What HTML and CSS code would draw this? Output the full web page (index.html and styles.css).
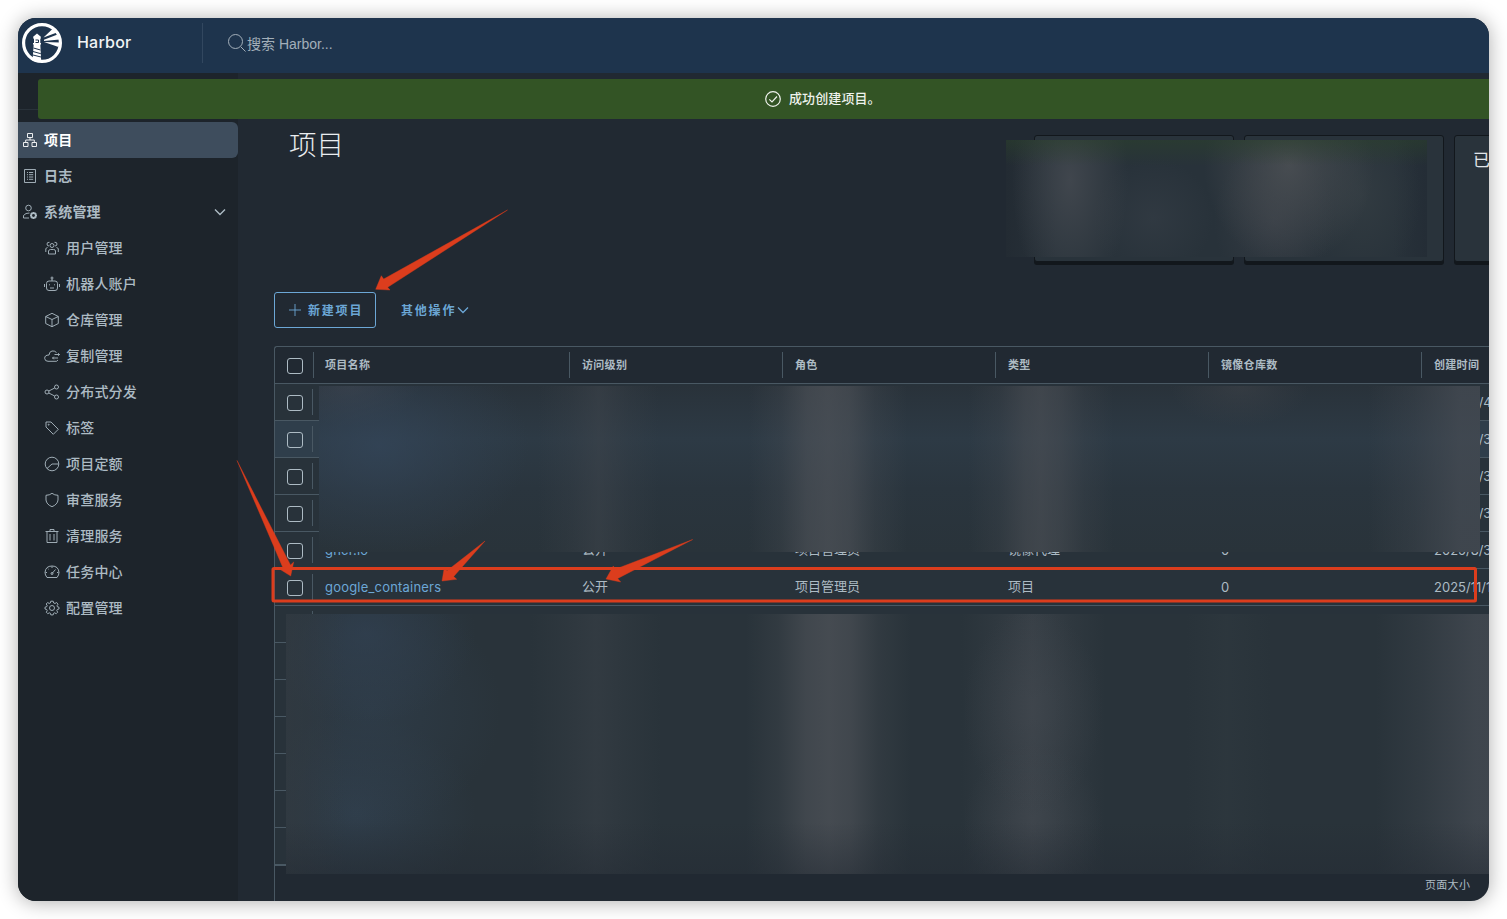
FILE: index.html
```html
<!DOCTYPE html>
<html lang="zh-CN">
<head>
    <meta charset="UTF-8">
    <meta name="viewport" content="width=device-width, initial-scale=1.0">
    <title>Harbor</title>
    <link rel="stylesheet" href="styles.css">
</head>
<body>
    <div class="window">
        <header class="header">
            <div class="branding">
                <svg class="logo" viewBox="0 0 40 40">
                    <circle cx="20" cy="20" r="18.4" fill="none" stroke="#fff" stroke-width="3.2"/>
                    <g fill="#fff">
                        <path d="M11 15.500L11.500 13.500L15 10.500L18.500 13.500L19 15.500Z"/>
                        <path d="M12 15H18.300V20H19V21.500H11V20H12Z"/>
                        <path d="M11.700 21H18.300L19.200 38H10.500Z"/>
                        <path d="M21.500 14.500L31.500 5L35 9.500Z"/>
                        <path d="M22 16.800L35.500 11.500L37.500 16.500L22 18Z"/>
                        <path d="M22 19L38 19.500L36.500 24Z"/>
                    </g>
                    <path d="M13.500 17H16.500V19.500H13.500M11.500 25L18.500 27M11 28.500L18.800 30.700M11 32L19 34" fill="none" stroke="#1e344d" stroke-width="1"/>
                </svg>
                <span class="title">Harbor</span>
            </div>
            <div class="search">
                <svg viewBox="0 0 18 18"><circle cx="7.500" cy="7.500" r="7"/><path d="M12.800 12.800L17.500 17.500"/></svg>
                <span>搜索 Harbor...</span>
            </div>
        </header>

        <!-- global message -->
        <div class="alert">
            <svg viewBox="0 0 16 16"><circle cx="8" cy="8" r="7.300"/><path d="M4.300 8.300L7 11L12 5.500"/></svg>
            <span>成功创建项目。</span>
        </div>

        <div class="main">
            <nav class="sidebar">
                <div class="nav-trigger"></div>
                <a class="nav-item active">
                    <svg viewBox="0 0 16 16"><path d="M5.500 1.500H10.500V5.500H5.500ZM1.500 10.500H6V14.500H1.500ZM10 10.500H14.500V14.500H10ZM8 5.500V8M3.700 10V8H12.300V10"/></svg>
                    <span>项目</span>
                </a>
                <a class="nav-item">
                    <svg viewBox="0 0 16 16"><path d="M2.500 1.500H13.500V14.500H2.500ZM5 4.500H6M7 4.500H11.200M5 6.700H6M7 6.700H11.200M5 9H6M7 9H11.200M5 11.300H6M7 11.300H11.200"/></svg>
                    <span>日志</span>
                </a>
                <a class="nav-item">
                    <svg viewBox="0 0 16 16"><circle cx="6.500" cy="4" r="2.800"/><path d="M7 14H1.500V11.500Q3.500 8.800 7.500 9"/><circle cx="11.500" cy="11.500" r="2.300" stroke-width="1.700"/><path d="M11.500 8V9M11.500 14V15M8 11.500H9M14 11.500H15M9 9L9.700 9.700M13.300 13.300L14 14M9 14L9.700 13.300M13.300 9.700L14 9" stroke-width="1.600"/></svg>
                    <span>系统管理</span>
                    <svg class="caret" viewBox="0 0 12 12"><path d="M1 3.500L6 8.500L11 3.500"/></svg>
                </a>
                <div class="nav-group">
                    <a class="nav-item">
                        <svg viewBox="0 0 16 16"><circle cx="8" cy="5.500" r="2"/><path d="M4.500 14V11Q5 9.500 6.500 9.500H9.500Q11.500 9.500 11.500 11V14ZM3.500 7.500L1.800 8.500V12M12.500 7.500L14.300 8.500V12M5 6Q3 6 3 4T5.500 2.300M11 6Q13 6 13 4T10.500 2.300"/></svg>
                        <span>用户管理</span>
                    </a>
                    <a class="nav-item">
                        <svg viewBox="0 0 16 16"><rect x="2.500" y="5" width="11" height="9.500" rx="2.500"/><path d="M8 5V3M.5 8V11M15.500 8V11M6 12H10M5.500 8.300V9.300M10.500 8.300V9.300"/><circle cx="8" cy="2" r="1"/></svg>
                        <span>机器人账户</span>
                    </a>
                    <a class="nav-item">
                        <svg viewBox="0 0 16 16"><path d="M8 1.300L14.300 4.500V11.500L8 14.700L1.700 11.500V4.500ZM1.700 4.500L8 7.500L14.300 4.500M8 7.500V14.700"/></svg>
                        <span>仓库管理</span>
                    </a>
                    <a class="nav-item">
                        <svg viewBox="0 0 16 16"><path d="M12.500 4.500Q10.500 2.500 8 3Q5.300 3.500 5 7Q.5 7 .7 10.500Q1 13.300 4 13.300H12.500L14 12M10.500 6.500H15.500M14.200 5.200L15.500 6.500L14.200 7.800M14 10H8.500M9.800 8.700L8.500 10L9.800 11.300"/></svg>
                        <span>复制管理</span>
                    </a>
                    <a class="nav-item">
                        <svg viewBox="0 0 16 16"><circle cx="3" cy="8" r="2"/><circle cx="12.500" cy="3" r="2"/><circle cx="12.500" cy="13" r="2"/><path d="M4.800 7L10.700 4M4.800 9L10.700 12"/></svg>
                        <span>分布式分发</span>
                    </a>
                    <a class="nav-item">
                        <svg viewBox="0 0 16 16"><path d="M2 2H7L14.300 9.300L9.300 14.300L2 7Z"/><circle cx="4.700" cy="4.700" r=".5"/></svg>
                        <span>标签</span>
                    </a>
                    <a class="nav-item">
                        <svg viewBox="0 0 16 16"><circle cx="8" cy="8" r="6.800"/><path d="M3 12.500L8 8H14.500"/></svg>
                        <span>项目定额</span>
                    </a>
                    <a class="nav-item">
                        <svg viewBox="0 0 16 16"><path d="M8 1.300Q10.500 3.300 14 3.300V8Q13.500 12.500 8 14.700Q2.500 12.500 2 8V3.300Q5.500 3.300 8 1.300Z"/></svg>
                        <span>审查服务</span>
                    </a>
                    <a class="nav-item">
                        <svg viewBox="0 0 16 16"><path d="M1.500 3.500H14.500M3 3.500V14.500H13V3.500M6 3V1.500H10V3M6 6V12.500M10 6V12.500"/></svg>
                        <span>清理服务</span>
                    </a>
                    <a class="nav-item">
                        <svg viewBox="0 0 16 16"><path d="M3 13.500Q1 11 1 8.500Q1.500 2 8 2Q14.500 2 15 8.500Q15 11 13 13.500ZM8 9.500L11.500 5.500M1.500 8.500H3M13 8.500H14.500M8 2.500V4M3.800 4.500L4.500 5.200"/><circle cx="8" cy="9.500" r="1"/></svg>
                        <span>任务中心</span>
                    </a>
                    <a class="nav-item">
                        <svg viewBox="0 0 16 16"><path d="M6.800 1.200H9.200L9.700 3L11 3.500L12.600 2.500L14 4.200L13 5.800L13.400 6.800L15 7.200V9L13.300 9.500L12.800 10.700L13.700 12.200L12.200 13.700L10.700 12.800L9.600 13.300L9.200 14.900H6.800L6.400 13.300L5.300 12.800L3.800 13.700L2.300 12.200L3.200 10.700L2.700 9.500L1 9V7.200L2.700 6.700L3.200 5.600L2.200 4L3.600 2.500L5.200 3.500L6.300 3Z"/><circle cx="8" cy="8" r="2.500"/></svg>
                        <span>配置管理</span>
                    </a>
                </div>
            </nav>

            <section class="content">
                <div class="summary">
                    <h1>项目</h1>
                    <div class="cards">
                        <div class="card"></div>
                        <div class="card"></div>
                        <div class="card"><span>已</span></div>
                        <div class="mask mask-cards"></div>
                    </div>
                </div>

                <div class="toolbar">
                    <button class="btn btn-outline">
                        <svg viewBox="0 0 12 12"><path d="M6 0V12M0 6H12"/></svg>
                        <span>新建项目</span>
                    </button>
                    <button class="btn">
                        <span>其他操作</span>
                        <svg class="arrow" viewBox="0 0 12 12"><path d="M1 3.500L6 8.500L11 3.500"/></svg>
                    </button>
                </div>

                <div class="datagrid">
                    <div class="row head">
                        <div class="check"><i></i></div>
                        <div class="cell name">项目名称</div>
                        <div class="cell">访问级别</div>
                        <div class="cell">角色</div>
                        <div class="cell">类型</div>
                        <div class="cell">镜像仓库数</div>
                        <div class="cell">创建时间</div>
                    </div>
                    <div class="row"><div class="check"><i></i></div><div class="cell date">2025/8/4</div></div>
                    <div class="row hover"><div class="check"><i></i></div><div class="cell date">2025/8/3</div></div>
                    <div class="row"><div class="check"><i></i></div><div class="cell date">2025/8/3</div></div>
                    <div class="row"><div class="check"><i></i></div><div class="cell date">2025/8/3</div></div>
                    <div class="row">
                        <div class="check"><i></i></div>
                        <div class="cell name"><a>ghcr.io</a></div>
                        <div class="cell zh">公开</div>
                        <div class="cell zh">项目管理员</div>
                        <div class="cell zh">镜像代理</div>
                        <div class="cell">0</div>
                        <div class="cell">2025/8/3</div>
                    </div>
                    <div class="row">
                        <div class="check"><i></i></div>
                        <div class="cell name"><a>google_containers</a></div>
                        <div class="cell zh">公开</div>
                        <div class="cell zh">项目管理员</div>
                        <div class="cell zh">项目</div>
                        <div class="cell">0</div>
                        <div class="cell">2025/11/1</div>
                    </div>
                    <div class="row"><div class="check"></div></div>
                    <div class="row"></div>
                    <div class="row"></div>
                    <div class="row"></div>
                    <div class="row"></div>
                    <div class="row"></div>
                    <div class="row last"></div>
                    <div class="foot">页面大小</div>

                    <div class="mask mask-top"></div>
                    <div class="mask mask-bottom"></div>
                </div>
            </section>
        </div>
    </div>

    <!-- red annotations -->
    <svg class="marks" viewBox="0 0 1507 919">
        <rect x="273" y="568.500" width="1202.500" height="32.500" rx="1"/>
        <path d="M507.500 210L383.700 279L381.300 275.700L375.700 289.300L390 290L387.700 287.300Z"/>
        <path d="M237 460.500L290.500 565L293.700 562L290.700 576L279.500 569L283 568Z"/>
        <path d="M485 541L447.300 570.500L444 569.300L442 581L456.700 579.300L453.700 576.500Z"/>
        <path d="M692.700 539.500L614.500 569.500L613.300 566L606 579L620.700 582L617.700 578.500Z"/>
    </svg>
</body>
</html>
```
FILE: styles.css
```css
* {
    box-sizing: border-box;
}

body {
    margin: 0;
    padding: 18px;
    height: 919px;
    overflow: hidden;
    background: #fff;
    font-family: Inter, "Noto Sans CJK SC", sans-serif;
    font-size: 13px;
    color: #adbbc4;
}

svg {
    fill: none;
    stroke: currentColor;
    flex: none;
}

.window {
    position: relative;
    width: 1471px;
    height: 883px;
    display: flex;
    flex-direction: column;
    overflow: hidden;
    border-radius: 18px;
    background: #212932;
    box-shadow: 0 1px 20px rgba(0, 0, 0, 0.33);
}

/* header */
.header {
    display: flex;
    height: 55px;
    flex: none;
    padding: 5px 0 0 4px;
    background: #1e344d;
}

.branding {
    display: flex;
    width: 181px;
    height: 40px;
    border-right: 1px solid #32475f;
}

.logo {
    width: 40px;
    height: 40px;
    stroke: none;
}

.title {
    margin-left: 15px;
    font-size: 16px;
    font-weight: 500;
    line-height: 39px;
    letter-spacing: 0.2px;
    color: #f1f4f6;
}

.search {
    display: flex;
    align-items: center;
    height: 40px;
    padding-left: 25px;
    font-family: "Liberation Sans", "Noto Sans CJK SC", sans-serif;
    font-size: 14px;
    color: #a3afba;
}

.search svg {
    width: 18px;
    height: 18px;
    margin-right: 1px;
}

/* success message */
.alert {
    position: absolute;
    z-index: 2;
    top: 61px;
    left: 20px;
    right: 0;
    height: 40px;
    display: flex;
    align-items: center;
    padding-left: 727px;
    gap: 8px;
    border-radius: 3px 0 0 3px;
    background: #335425;
    color: #eef2ec;
    font-weight: 500;
}

.alert span {
    padding-bottom: 3px;
    letter-spacing: 0.1px;
}

.alert svg {
    width: 16px;
    height: 16px;
    stroke-width: 1.2;
}

.main {
    display: flex;
    flex: 1;
    min-height: 0;
}

/* sidebar */
.sidebar {
    width: 220px;
    flex: none;
    background: #1d242b;
}

.nav-trigger {
    height: 37px;
    margin-bottom: 12px;
    border-bottom: 1px solid #29323a;
}

.nav-item {
    display: flex;
    align-items: center;
    height: 36px;
    padding-left: 4px;
    border-radius: 0 6px 6px 0;
    font-size: 14px;
    font-weight: 700;
    letter-spacing: 0.2px;
    color: #adbbc4;
}

.nav-item span {
    padding-bottom: 2px;
}

.nav-item svg {
    width: 16px;
    height: 16px;
    margin-right: 6px;
    stroke-width: 0.9;
}

.nav-item.active {
    background: #3e4d5d;
    color: #fff;
}

.nav-item .caret {
    width: 12px;
    height: 12px;
    margin: 0 12px 0 auto;
    stroke-width: 1.4;
}

.nav-group .nav-item {
    padding-left: 26px;
    font-weight: 500;
}

/* content */
.content {
    flex: 1;
    min-width: 0;
    padding-left: 36px;
}

.summary {
    display: flex;
    justify-content: space-between;
    height: 219px;
    padding-top: 49px;
}

h1 {
    margin: 1px 0 0 15px;
    font-size: 27.5px;
    line-height: 44px;
    font-weight: 300;
    color: #eaedf0;
}

.cards {
    position: relative;
    display: flex;
    gap: 10px;
    width: 455px;
    margin-top: 13px;
}

.card {
    width: 200px;
    height: 127px;
    flex: none;
    padding: 10px 18px;
    border: 1px solid #12171c;
    border-radius: 3px;
    box-shadow: 0 3px 0 #12171c;
    background: #29333b;
    font-size: 17px;
    font-weight: 400;
    color: #e0e5e9;
}

.toolbar {
    display: flex;
}

.btn {
    display: flex;
    align-items: center;
    height: 36px;
    padding: 0 0 0 25px;
    border: 0;
    background: none;
    font-family: inherit;
    font-size: 12px;
    font-weight: 700;
    letter-spacing: 1.8px;
    color: #6ca7d6;
}

.btn-outline {
    width: 102px;
    padding: 0 0 0 14px;
    border: 1px solid #6ca7d6;
    border-radius: 3px;
}

.btn span {
    padding-bottom: 1px;
}

.btn svg {
    width: 12px;
    height: 12px;
    margin-right: 7px;
    stroke-width: 0.9;
}

.btn .arrow {
    margin: 0 0 0 1px;
    stroke-width: 1.3;
}

/* datagrid */
.datagrid {
    position: relative;
    height: 560px;
    margin-top: 18px;
    border-top: 1px solid #495863;
    border-left: 1px solid #495863;
    border-radius: 3px 0 0 0;
}

.row {
    display: flex;
    align-items: center;
    height: 37px;
    border-bottom: 1px solid #495863;
    background: #28323a;
    overflow: hidden;
}

.row.hover {
    background: #2f3e4b;
}

.row.last {
    height: 38px;
    border-bottom-width: 2px;
}

.check {
    width: 38px;
    height: 26px;
    flex: none;
    padding: 6px 0 0 12px;
    border-right: 1px solid #495863;
}

.check i {
    display: block;
    width: 16px;
    height: 16px;
    border: 1px solid #adbbc4;
    border-radius: 3px;
}

.cell {
    width: 213px;
    flex: none;
    padding: 0 0 1px 12px;
    white-space: nowrap;
}

.cell.zh {
    padding-bottom: 3px;
}

.cell.name {
    width: 257px;
}

.cell.date {
    margin-left: 1109px;
}

.cell a {
    letter-spacing: 0.2px;
    color: #6ca7d6;
}

.head {
    background: none;
    font-size: 11px;
    font-weight: 700;
    letter-spacing: 0.3px;
}

.head .check {
    width: 39px;
}

.head .cell {
    height: 26px;
    line-height: 26px;
    border-right: 1px solid #495863;
}

.head .cell.name {
    width: 256px;
    padding-left: 11px;
}

.foot {
    display: flex;
    align-items: center;
    height: 35px;
    padding-left: 1150px;
    font-size: 11px;
    letter-spacing: 0.3px;
    white-space: nowrap;
}

/* blurred areas */
.mask {
    position: absolute;
}

.mask-cards {
    left: -28px;
    top: 5px;
    width: 421px;
    height: 117px;
    background:
        linear-gradient(rgba(43, 66, 42, 0.5), rgba(43, 66, 42, 0) 22%),
        radial-gradient(ellipse 58px 125px at 64px 40px, rgba(70, 75, 82, 0.8), rgba(70, 75, 82, 0.4) 50%, rgba(70, 75, 82, 0)),
        radial-gradient(ellipse 85px 100px at 283px 25px, rgba(78, 82, 86, 0.8), rgba(78, 82, 86, 0.35) 55%, rgba(78, 82, 86, 0)),
        radial-gradient(ellipse 60px 80px at 268px 80px, rgba(66, 70, 78, 0.5), rgba(66, 70, 78, 0)),
        radial-gradient(ellipse 60px 60px at 147px 78px, rgba(56, 64, 73, 0.5), rgba(56, 64, 73, 0)),
        radial-gradient(ellipse 60px 90px at 355px 55px, rgba(56, 65, 70, 0.6), rgba(56, 65, 70, 0)),
        linear-gradient(90deg, #232b33, #28323a 12%, #28323a 92%, #242d36);
}

.mask-top {
    left: 44px;
    top: 39px;
    width: 1161px;
    height: 166px;
    background:
        radial-gradient(ellipse 150px 110px at 60px 60px, rgba(52, 70, 90, 0.75), rgba(52, 70, 90, 0.3) 55%, rgba(52, 70, 90, 0)),
        radial-gradient(ellipse 70px 40px at 30px 0, rgba(64, 68, 76, 0.6), rgba(64, 68, 76, 0)),
        radial-gradient(ellipse 70px 40px at 921px 0, rgba(64, 68, 74, 0.5), rgba(64, 68, 74, 0)),
        linear-gradient(90deg, rgba(64, 70, 77, 0) 220px, rgba(64, 70, 77, 0.2) 250px, rgba(64, 70, 77, 0.5) 280px, rgba(64, 70, 77, 0.2) 310px, rgba(64, 70, 77, 0) 340px),
        linear-gradient(90deg, rgba(80, 84, 90, 0) 430px, rgba(80, 84, 90, 0.22) 462px, rgba(80, 84, 90, 0.6) 488px, rgba(80, 84, 90, 0.7) 509px, rgba(80, 84, 90, 0.6) 530px, rgba(80, 84, 90, 0.22) 556px, rgba(80, 84, 90, 0) 588px),
        linear-gradient(90deg, rgba(76, 80, 86, 0) 650px, rgba(76, 80, 86, 0.2) 680px, rgba(76, 80, 86, 0.55) 706px, rgba(76, 80, 86, 0.65) 722px, rgba(76, 80, 86, 0.5) 742px, rgba(76, 80, 86, 0.2) 765px, rgba(76, 80, 86, 0) 795px),
        linear-gradient(90deg, rgba(70, 76, 84, 0) 1050px, rgba(70, 76, 84, 0.3) 1095px, rgba(70, 76, 84, 0.75) 1140px),
        linear-gradient(#29323a, #2d3a45 32%, #2a353e 62%, #29333a);
}

.mask-bottom {
    left: 11px;
    top: 267px;
    width: 1203px;
    height: 260px;
    background:
        linear-gradient(rgba(36, 43, 52, 0) 80%, rgba(36, 43, 52, 0.5)),
        linear-gradient(90deg, rgba(50, 58, 65, 0.7), rgba(50, 58, 65, 0) 60px),
        radial-gradient(ellipse 110px 90px at 80px 20px, rgba(50, 66, 84, 0.65), rgba(50, 66, 84, 0)),
        radial-gradient(ellipse 130px 120px at 85px 95px, rgba(50, 66, 82, 0.55), rgba(50, 66, 82, 0)),
        radial-gradient(ellipse 120px 100px at 70px 200px, rgba(50, 66, 82, 0.7), rgba(50, 66, 82, 0)),
        radial-gradient(ellipse 70px 100px at 747px 95px, rgba(72, 77, 84, 0.4), rgba(72, 77, 84, 0)),
        radial-gradient(ellipse 70px 80px at 747px 210px, rgba(72, 77, 84, 0.4), rgba(72, 77, 84, 0)),
        linear-gradient(90deg, rgba(64, 70, 77, 0) 245px, rgba(64, 70, 77, 0.2) 280px, rgba(64, 70, 77, 0.4) 310px, rgba(64, 70, 77, 0.2) 340px, rgba(64, 70, 77, 0) 375px),
        linear-gradient(90deg, rgba(80, 84, 90, 0) 460px, rgba(80, 84, 90, 0.22) 492px, rgba(80, 84, 90, 0.6) 520px, rgba(80, 84, 90, 0.72) 543px, rgba(80, 84, 90, 0.6) 565px, rgba(80, 84, 90, 0.22) 592px, rgba(80, 84, 90, 0) 625px),
        linear-gradient(90deg, rgba(72, 77, 84, 0) 675px, rgba(72, 77, 84, 0.2) 710px, rgba(72, 77, 84, 0.5) 747px, rgba(72, 77, 84, 0.2) 785px, rgba(72, 77, 84, 0) 820px),
        linear-gradient(90deg, rgba(52, 62, 68, 0) 900px, rgba(52, 62, 68, 0.3) 940px, rgba(52, 62, 68, 0) 985px),
        linear-gradient(90deg, rgba(70, 76, 84, 0) 1090px, rgba(70, 76, 84, 0.3) 1138px, rgba(70, 76, 84, 0.75) 1190px),
        #29333a;
}

/* arrows and frame drawn over the page */
.marks {
    position: absolute;
    top: 0;
    left: 0;
    width: 1507px;
    height: 919px;
    fill: #dc3d1d;
    stroke: #dc3d1d;
    stroke-width: 0.4;
}

.marks rect {
    fill: none;
    stroke-width: 3;
}
```
